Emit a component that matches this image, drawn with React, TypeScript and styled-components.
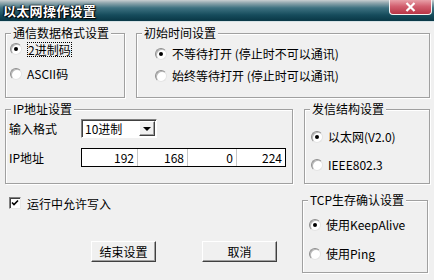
import React from "react";
import styled, { createGlobalStyle } from "styled-components";

const Global = createGlobalStyle`
  html, body { margin: 0; padding: 0; background: #f0f0f0; }
  body { font-family: "Noto Sans CJK SC", "Noto Sans", sans-serif; font-size: 12px; color: #000; }
  * { box-sizing: border-box; }
`;

const Window = styled.div`
  width: 434px;
  height: 280px;
  overflow: hidden;
  background: #f0f0f0;
  display: flex;
  flex-direction: column;
`;

const TitleBar = styled.div`
  height: 22px;
  flex: none;
  display: flex;
  justify-content: space-between;
  align-items: flex-start;
  background: linear-gradient(to bottom, #c9cfd1 0px, #8fa6ad 3px, #3d7180 8px, #164c5c 15px, #0b3a49 20px, #0b3a49 21px);
  border-bottom: 1px solid #d7e2e5;
`;

const Title = styled.div`
  margin-top: 3px;
  padding-left: 3px;
  color: #fff;
  font-weight: bold;
  font-size: 13px;
  line-height: 16px;
  letter-spacing: 0.3px;
  text-shadow: 0 0 2px #000, 1px 1px 1px #000, -1px 0 1px #000;
`;

const CloseBtn = styled.div`
  width: 43px;
  height: 15px;
  margin-right: 2px;
  border: 1px solid #f4f4f4;
  border-top: none;
  border-radius: 0 0 4px 4px;
  background: linear-gradient(to bottom, #e8a0a8 0%, #d26070 45%, #b83445 100%);
  display: flex;
  align-items: center;
  justify-content: center;
`;

const Body = styled.div`
  padding: 4px 6px 0 5px;
  display: flex;
  flex-direction: column;
`;

const Row = styled.div<{ $mt?: number }>`
  display: flex;
  gap: 11px;
  margin-top: ${(p) => p.$mt ?? 0}px;
`;

const Group = styled.fieldset<{ $w: number; $h: number; $mt?: number }>`
  margin: ${(p) => p.$mt ?? 0}px 0 0 0;
  padding: 0;
  min-width: 0;
  width: ${(p) => p.$w}px;
  height: ${(p) => p.$h}px;
  border: 1px solid #a0a0a0;
  box-shadow: inset 1px 1px 0 #fff, 1px 1px 0 #fff;
  flex: none;
`;

const Legend = styled.legend`
  margin-left: 5px;
  padding: 0 2px;
  font-size: 12px;
  line-height: 14px;
  background: #f0f0f0;
`;

const Content = styled.div<{ $pt: number; $pl: number; $gap: number }>`
  display: flex;
  flex-direction: column;
  padding-top: ${(p) => p.$pt}px;
  padding-left: ${(p) => p.$pl}px;
  gap: ${(p) => p.$gap}px;
`;

const OptionRow = styled.label`
  display: flex;
  align-items: center;
  gap: 5px;
  height: 16px;
  line-height: 16px;
  white-space: nowrap;
`;

const RadioCircle = styled.span<{ $on?: boolean }>`
  width: 12px;
  height: 12px;
  border-radius: 50%;
  background: #fff;
  border: 1px solid;
  border-color: #8e8e8e #e4e4e4 #e4e4e4 #8e8e8e;
  box-shadow: inset 1px 1px 0 #b8b8b8;
  display: flex;
  align-items: center;
  justify-content: center;
  flex: none;
  &::after {
    content: "";
    width: 4px;
    height: 4px;
    border-radius: 50%;
    background: ${(p) => (p.$on ? "#000" : "transparent")};
  }
`;

const FocusText = styled.span`
  outline: 1px dotted #000;
  outline-offset: -1px;
  padding: 0 1px;
  line-height: 15px;
`;

const FieldRow = styled.div`
  display: flex;
  align-items: center;
  height: 19px;
`;

const FieldLabel = styled.span`
  width: 72px;
  flex: none;
`;

const Select = styled.div`
  width: 76px;
  height: 19px;
  background: #fff;
  border: 1px solid;
  border-color: #808080 #fff #fff #808080;
  box-shadow: inset 1px 1px 0 #404040;
  display: flex;
  align-items: center;
  justify-content: space-between;
  padding: 1px 1px 1px 3px;
  line-height: 15px;
`;

const DropBtn = styled.span`
  width: 16px;
  height: 15px;
  background: #f0f0f0;
  border: 1px solid;
  border-color: #fff #404040 #404040 #fff;
  box-shadow: inset -1px -1px 0 #a0a0a0;
  display: flex;
  align-items: center;
  justify-content: center;
  &::after {
    content: "";
    border-left: 4px solid transparent;
    border-right: 4px solid transparent;
    border-top: 4px solid #000;
  }
`;

const IpBox = styled.div`
  width: 205px;
  height: 19px;
  border: 1px solid #000;
  background: #fff;
  display: grid;
  grid-template-columns: 56px 50px 49px 1fr;
`;

const IpCell = styled.span<{ $last?: boolean }>`
  text-align: right;
  padding-right: 3px;
  line-height: 17px;
  border-right: ${(p) => (p.$last ? "none" : "1px solid #c8c8c8")};
`;

const LeftCol = styled.div`
  width: 288px;
  display: flex;
  flex-direction: column;
`;

const CheckRow = styled.label`
  display: flex;
  align-items: center;
  gap: 6px;
  height: 16px;
  margin-top: 11px;
  padding-left: 4px;
`;

const CheckBox = styled.span`
  width: 12px;
  height: 12px;
  background: #fff;
  border: 1px solid;
  border-color: #808080 #e8e8e8 #e8e8e8 #808080;
  box-shadow: inset 1px 1px 0 #404040;
  display: flex;
  align-items: center;
  justify-content: center;
`;

const ButtonRow = styled.div`
  display: flex;
  gap: 46px;
  margin-top: 30px;
  padding-left: 86px;
`;

const Button = styled.button<{ $w: number }>`
  width: ${(p) => p.$w}px;
  height: 21px;
  padding: 0;
  background: #f0f0f0;
  font-family: inherit;
  font-size: 12px;
  line-height: 17px;
  color: #000;
  border: 1px solid;
  border-color: #fff #404040 #404040 #fff;
  box-shadow: inset -1px -1px 0 #a0a0a0;
`;

const Radio = ({ on, children }: { on?: boolean; children: React.ReactNode }) => (
  <OptionRow>
    <RadioCircle $on={on} />
    {children}
  </OptionRow>
);

export default function App() {
  return (
    <>
      <Global />
      <Window>
        <TitleBar>
          <Title>以太网操作设置</Title>
          <CloseBtn>
            <svg width="11" height="10" viewBox="0 0 11 10">
              <path d="M1.5 1 L9.5 9 M9.5 1 L1.5 9" stroke="#fff" strokeWidth="2.2" />
            </svg>
          </CloseBtn>
        </TitleBar>
        <Body>
          <Row>
            <Group $w={120} $h={72}>
              <Legend>通信数据格式设置</Legend>
              <Content $pt={1} $pl={4} $gap={9}>
                <Radio on>
                  <FocusText>2进制码</FocusText>
                </Radio>
                <Radio>ASCII码</Radio>
              </Content>
            </Group>
            <Group $w={294} $h={72}>
              <Legend>初始时间设置</Legend>
              <Content $pt={6} $pl={18} $gap={6}>
                <Radio on>不等待打开 (停止时不可以通讯)</Radio>
                <Radio>始终等待打开 (停止时可以通讯)</Radio>
              </Content>
            </Group>
          </Row>
          <Row $mt={4}>
            <Group $w={288} $h={82}>
              <Legend>IP地址设置</Legend>
              <Content $pt={3} $pl={3} $gap={10}>
                <FieldRow>
                  <FieldLabel>输入格式</FieldLabel>
                  <Select>
                    <span>10进制</span>
                    <DropBtn />
                  </Select>
                </FieldRow>
                <FieldRow>
                  <FieldLabel>IP地址</FieldLabel>
                  <IpBox>
                    <IpCell>192</IpCell>
                    <IpCell>168</IpCell>
                    <IpCell>0</IpCell>
                    <IpCell $last>224</IpCell>
                  </IpBox>
                </FieldRow>
              </Content>
            </Group>
            <Group $w={126} $h={82}>
              <Legend>发信结构设置</Legend>
              <Content $pt={13} $pl={6} $gap={12}>
                <Radio on>以太网(V2.0)</Radio>
                <Radio>IEEE802.3</Radio>
              </Content>
            </Group>
          </Row>
          <Row>
            <LeftCol>
              <CheckRow>
                <CheckBox>
                  <svg width="8" height="8" viewBox="0 0 8 8">
                    <path d="M1 3.5 L3 5.5 L7 1.5" stroke="#000" strokeWidth="1.6" fill="none" />
                  </svg>
                </CheckBox>
                运行中允许写入
              </CheckRow>
              <ButtonRow>
                <Button $w={65}>结束设置</Button>
                <Button $w={75}>取消</Button>
              </ButtonRow>
            </LeftCol>
            <Group $w={126} $h={80} $mt={9}>
              <Legend>TCP生存确认设置</Legend>
              <Content $pt={10} $pl={6} $gap={13}>
                <Radio on>使用KeepAlive</Radio>
                <Radio>使用Ping</Radio>
              </Content>
            </Group>
          </Row>
        </Body>
      </Window>
    </>
  );
}
